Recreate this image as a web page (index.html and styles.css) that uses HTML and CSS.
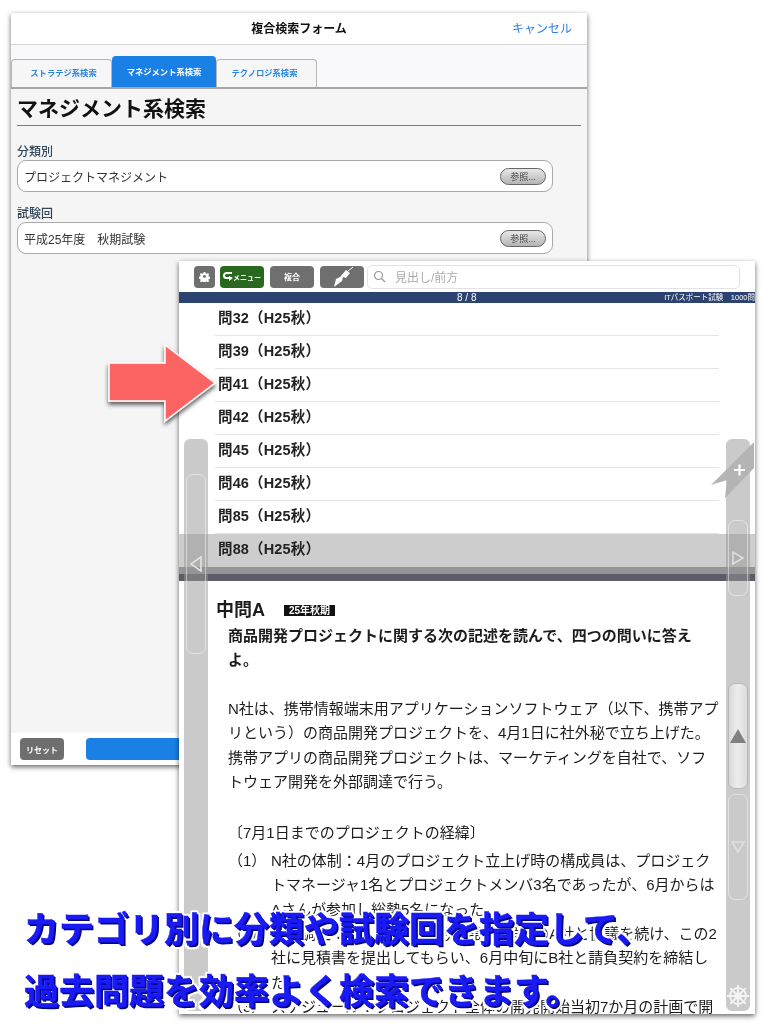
FILE: index.html
```html
<!DOCTYPE html>
<html lang="ja">
<head>
<meta charset="utf-8">
<title>複合検索フォーム</title>
<link rel="stylesheet" href="styles.css">
</head>
<body>
<div class="stage">
  <section class="win win-back">
    <header class="form-head">
      <span class="form-spacer"></span>
      <h1 class="form-title">複合検索フォーム</h1>
      <a class="form-cancel">キャンセル</a>
    </header>
    <nav class="tabs">
      <span class="tab">ストラテジ系検索</span>
      <span class="tab tab-active">マネジメント系検索</span>
      <span class="tab">テクノロジ系検索</span>
    </nav>
    <main class="form-body">
      <h2 class="form-h2">マネジメント系検索</h2>
      <label class="field-label">分類別</label>
      <div class="field"><span>プロジェクトマネジメント</span><span class="ref-btn">参照...</span></div>
      <label class="field-label">試験回</label>
      <div class="field"><span>平成25年度　秋期試験</span><span class="ref-btn">参照...</span></div>
    </main>
    <footer class="form-foot">
      <span class="reset-btn">リセット</span>
      <span class="search-btn"></span>
    </footer>
  </section>

  <section class="win win-front">
    <div class="toolbar">
      <span class="tool tool-gear">
        <svg width="11" height="11" viewBox="0 0 24 24"><path fill="#fff" fill-rule="evenodd" d="M10 1h4l1 3.600 2.300 1 3.300-1.800 2.600 2.600-1.800 3.300 1 2.300 3.600 1v4l-3.600 1-1 2.300 1.800 3.300-2.600 2.600-3.300-1.800-2.300 1-1 3.600h-4l-1-3.600-2.300-1-3.300 1.800-2.600-2.600 1.800-3.300-1-2.300-3.600-1v-4l3.600-1 1-2.300-1.800-3.300 2.600-2.600 3.300 1.800 2.300-1zM12 8.500a3.500 3.500 0 1 0 0 7 3.500 3.500 0 0 0 0-7z" transform="translate(1.200 1.200) scale(.9)"/></svg>
      </span>
      <span class="tool tool-menu">
        <svg width="10" height="11" viewBox="0 0 10 11"><path fill="none" stroke="#fff" stroke-width="2" d="M9 2H3.500a2.500 2.500 0 0 0 0 5H8"/><path fill="#fff" d="M6 5l4 2-4 3z"/></svg>メニュー
      </span>
      <span class="tool tool-plain">複合</span>
      <span class="tool tool-pen">
        <svg width="34" height="22" viewBox="0 0 34 22"><path fill="#fff" d="M9 21l2-8 4-2 6-7 4 3-4 5-3-1-1 4z"/><path stroke="#fff" stroke-width="1" d="M23 5l5-4"/></svg>
      </span>
      <div class="search">
        <svg width="13" height="13" viewBox="0 0 13 13"><circle cx="5.500" cy="5.500" r="4" fill="none" stroke="#999" stroke-width="1.200"/><path stroke="#999" stroke-width="1.200" d="M8.500 8.500l3.500 3.500"/></svg>
        <span>見出し/前方</span>
      </div>
    </div>
    <div class="statusbar">
      <span class="status-count">8 / 8</span>
      <span class="status-name">ITパスポート試験　1000問</span>
    </div>
    <ul class="qlist">
      <li class="qrow">問32（H25秋）</li>
      <li class="qrow">問39（H25秋）</li>
      <li class="qrow">問41（H25秋）</li>
      <li class="qrow">問42（H25秋）</li>
      <li class="qrow">問45（H25秋）</li>
      <li class="qrow">問46（H25秋）</li>
      <li class="qrow">問85（H25秋）</li>
      <li class="qrow qrow-active">問88（H25秋）</li>
    </ul>
    <div class="splitter"></div>
    <article class="content">
      <div class="content-head"><h2 class="content-title">中問A</h2><span class="content-badge">25年秋期</span></div>
      <p class="lead">商品開発プロジェクトに関する次の記述を読んで、四つの問いに答えよ。</p>
      <p class="para">N社は、携帯情報端末用アプリケーションソフトウェア（以下、携帯アプリという）の商品開発プロジェクトを、4月1日に社外秘で立ち上げた。携帯アプリの商品開発プロジェクトは、マーケティングを自社で、ソフトウェア開発を外部調達で行う。</p>
      <p class="subhead">〔7月1日までのプロジェクトの経緯〕</p>
      <div class="item"><span class="item-no">（1）</span><p class="item-text">N社の体制：4月のプロジェクト立上げ時の構成員は、プロジェクトマネージャ1名とプロジェクトメンバ3名であったが、6月からはAさんが参加し総勢5名になった。</p></div>
      <div class="item"><span class="item-no">（2）</span><p class="item-text">外部調達：5月上旬から開発委託先候補のA社と協議を続け、この2<br>社に見積書を提出してもらい、6月中旬にB社と請負契約を締結した。</p></div>
      <div class="item"><span class="item-no">（3）</span><p class="item-text">スケジュール：プロジェクト全体の開発開始当初7か月の計画で開発を進めた。</p></div>
    </article>

    <aside class="rail rail-left">
      <div class="rail-btn rail-prev"><svg width="16" height="18" viewBox="0 0 16 18"><path fill="none" stroke="#e8e8e8" stroke-width="1.500" d="M13 2v14L3 9z"/></svg></div>
    </aside>
    <aside class="rail rail-right">
      <div class="rail-btn rail-next"><svg width="14" height="16" viewBox="0 0 14 16"><path fill="none" stroke="#e0e0e0" stroke-width="1.500" d="M2 2v12l10-6z"/></svg></div>
      <div class="rail-btn rail-up"><svg width="16" height="14" viewBox="0 0 16 14"><path fill="#808080" d="M8 0l8 14H0z"/></svg></div>
      <div class="rail-btn rail-down"><svg width="16" height="14" viewBox="0 0 16 14"><path fill="none" stroke="#e0e0e0" stroke-width="1.500" d="M2 2h12L8 12z"/></svg></div>
      <div class="rail-wheel">
        <svg width="24" height="24" viewBox="0 0 24 24" fill="none" stroke="#f4f4f4"><circle cx="12" cy="12" r="8" stroke-width="1.800"/><circle cx="12" cy="12" r="3" stroke-width="1.500"/><path stroke-width="1.800" d="M12 1v22M1 12h22M4.200 4.200l15.600 15.600M19.800 4.200L4.200 19.800"/></svg>
      </div>
    </aside>
    <svg class="bookmark" width="46" height="60" viewBox="0 0 46 60"><path fill="#b4b4b4" d="M1 45L44 2v26L15 58l2-18z"/><path stroke="#fff" stroke-width="2.200" d="M24 30h11M29.500 24.500v11"/></svg>
  </section>

  <svg class="arrow" width="126" height="96" viewBox="0 0 126 96">
    <defs><filter id="arrow-shadow" x="-20%" y="-20%" width="140%" height="150%"><feDropShadow dx="0" dy="3" stdDeviation="2" flood-color="#000" flood-opacity=".65"/></filter></defs>
    <path fill="#ff6363" fill-opacity=".96" stroke="#fff" stroke-width="1.500" filter="url(#arrow-shadow)" d="M5 22h56V4l50 38-50 38V60H5z"/>
  </svg>

  <p class="caption">カテゴリ別に分類や試験回を指定して、<br>過去問題を効率よく検索できます。</p>
</div>
</body>
</html>
```
FILE: styles.css
```css
* { box-sizing: border-box; }
html, body { margin: 0; padding: 0; background: #fff; }
body { font-family: "Liberation Sans", "Noto Sans CJK JP", sans-serif; color: #111; text-spacing-trim: space-all; }
h1, h2, p, ul { margin: 0; padding: 0; }
.stage { position: relative; width: 768px; height: 1024px; overflow: hidden; background: #fff; filter: blur(.35px); }

.win { position: absolute; width: 576px; display: flex; flex-direction: column; background: #fff; box-shadow: 0 2px 5px rgba(0,0,0,.6); }
.win-back { left: 11px; top: 13px; height: 752px; }
.win-front { left: 179px; top: 261px; height: 753px; overflow: hidden; }

.form-head { height: 32px; flex: none; display: flex; align-items: center; justify-content: space-between; padding: 0 15px 2px 0; border-bottom: 1px solid #d8d8d8; }
.form-spacer { width: 75px; }
.form-title { font-size: 12px; font-weight: 700; }
.form-cancel { font-size: 12px; color: #2b7fe6; }
.tabs { height: 44px; flex: none; display: flex; align-items: flex-end; background: #f9f9fc; border-bottom: 2px solid #a6a6a6; }
.tab { width: 101px; height: 28px; padding: 0 0 3px 4px; display: flex; align-items: center; justify-content: center; font-size: 8.300px; font-weight: 700; color: #2b87e3; background: #f6f6f6; border: 1px solid #b5b5b5; border-bottom: 0; border-radius: 4px 4px 0 0; }
.tab-active { width: 104px; height: 31px; padding: 0 0 3px; color: #fff; background: #1a80e6; border-color: #1a80e6; }
.tab:last-child { padding: 0 4px 3px 0; }
.form-body { flex: 1; background: #f5f5f5; padding: 0 6px; }
.form-h2 { font-size: 21px; font-weight: 700; line-height: 40px; height: 37px; border-bottom: 1px solid #7d7d7d; }
.field-label { display: block; font-size: 12px; line-height: 16px; color: #34465a; font-weight: 500; margin-top: 18px; }
.field + .field-label { margin-top: 14px; }
.field { width: 536px; height: 32px; display: flex; align-items: center; justify-content: space-between; padding: 0 6px; font-size: 12px; color: #333; background: #fff; border: 1px solid #a9a9a9; border-radius: 9px; }
.ref-btn { width: 46px; height: 17px; display: flex; align-items: center; justify-content: center; font-size: 9px; color: #444; border: 1px solid #666; border-radius: 9px; background: linear-gradient(#e8e8e8, #b4b4b4); }
.form-foot { height: 32px; flex: none; display: flex; align-items: center; gap: 22px; padding: 0 0 0 9px; background: #fff; }
.reset-btn { width: 44px; height: 22px; display: flex; align-items: center; justify-content: center; border-radius: 4px; background: #6e6e6e; color: #fff; font-size: 8px; font-weight: 700; }
.search-btn { flex: 1; height: 22px; margin-right: 10px; border-radius: 4px; background: #1a80e6; }

.toolbar { height: 31px; flex: none; display: flex; align-items: center; padding-left: 15px; gap: 5px; background: #fff; }
.tool { height: 22px; flex: none; display: flex; align-items: center; justify-content: center; border-radius: 4px; background: #6f6f6f; color: #fff; font-size: 8px; font-weight: 700; }
.tool-gear { width: 21px; }
.tool-menu { width: 44px; background: #28691f; font-size: 7px; }
.tool-plain { width: 44px; margin-left: 1px; }
.tool-pen { width: 44px; margin-left: 1px; }
.search { flex: 1; height: 24px; margin-left: -2px; margin-right: 15px; display: flex; align-items: center; gap: 9px; padding-left: 5px; border: 1px solid #e3e3e3; border-radius: 5px; background: #fff; font-size: 12px; color: #aaa; }
.statusbar { height: 11px; flex: none; display: flex; align-items: center; justify-content: space-between; padding: 0 0 0 278px; background: #2c4270; color: #fff; font-size: 10px; line-height: 11px; }
.status-name { font-size: 7.500px; white-space: nowrap; }
.qlist { list-style: none; flex: none; }
.qrow { height: 33px; margin: 0 36px; padding-left: 3px; border-bottom: 1px solid #e4e4e4; font-size: 14.500px; letter-spacing: .15px; font-weight: 700; line-height: 30px; color: #222; }
.qrow-active { margin: 0; padding-left: 39px; background: #cdcdcd; border-bottom: 0; }
.splitter { height: 14px; flex: none; background: linear-gradient(#959595 0 7px, #5c5c68 7px); }
.content { flex: 1; padding: 19px 36px 0 37px; font-size: 15px; line-height: 24.400px; color: #1c1c1c; }
.content-head { display: flex; align-items: center; gap: 19px; height: 20px; }
.content-title { font-size: 18px; font-weight: 700; line-height: 20px; }
.content-badge { background: #111; color: #fff; font-size: 10px; font-weight: 700; line-height: 11px; padding: 0 5px; }
.lead { font-weight: 700; margin: 4px 0 0 12px; }
.para { margin: 24px 0 0 12px; }
.subhead { margin: 27px 0 0 12px; }
.item { display: flex; margin-left: 12px; }
.subhead + .item { margin-top: 3px; }
.item-no { width: 43px; flex: none; }
.item-text { flex: 1; }

.rail { position: absolute; top: 178px; bottom: 3px; width: 24px; background: rgba(150,150,150,.5); border-radius: 6px; }
.rail-left { left: 5px; }
.rail-right { right: 5px; }
.rail-btn { position: absolute; left: 2px; right: 2px; display: flex; align-items: center; justify-content: center; border: 1.500px solid rgba(255,255,255,.45); border-radius: 7px; }
.rail-prev { top: 35px; height: 180px; }
.rail-next { top: 81px; height: 76px; }
.rail-up { top: 244px; height: 106px; background: linear-gradient(90deg, #d8d8d8, #ededed 45%, #dcdcdc); border-color: #b8b8b8; }
.rail-down { top: 355px; height: 106px; }
.rail-wheel { position: absolute; left: 0; bottom: 3px; width: 24px; height: 24px; }
.bookmark { position: absolute; left: 531px; top: 179px; }

.arrow { position: absolute; left: 104px; top: 341px; }
.caption { position: absolute; left: 24px; top: 899px; font-size: 35px; font-weight: 700; line-height: 62px; white-space: nowrap; color: #1a1af5; -webkit-text-stroke: .5px #1a1af5;
  text-shadow: 1px 1px 0 #0a0aa0, 2px 2px 0 #040470, -2px 0 1px #fff, 2px 0 1px #fff, 0 -2px 1px #fff, -2px -2px 1px #fff, 2px -2px 1px #fff, -2px 3px 1px #fff, 3px 4px 1px #fff, 0 4px 1px #fff, 4px 1px 1px #fff; }
```
